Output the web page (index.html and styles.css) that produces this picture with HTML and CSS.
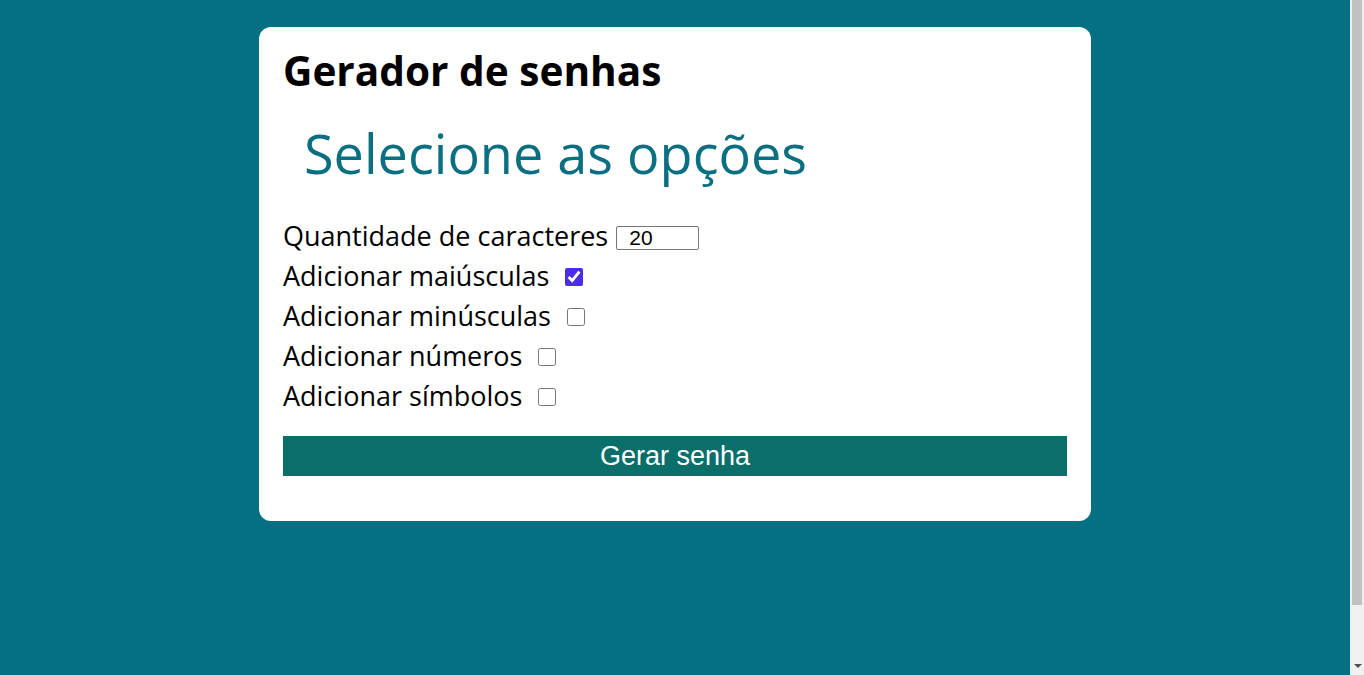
FILE: index.html
```html
<!DOCTYPE html>
<html lang="pt-BR">
<head>
<meta charset="utf-8">
<title>Gerador de senhas</title>
<link rel="stylesheet" href="styles.css">
</head>
<body>
<main class="card">
  <h1 class="title">Gerador de senhas</h1>
  <h2 class="subtitle">Selecione as opções</h2>
  <form class="options">
    <div class="row"><label for="qtd">Quantidade de caracteres</label> <input id="qtd" class="num" type="text" value="20"></div>
    <div class="row"><label for="mai">Adicionar maiúsculas</label> <input id="mai" class="check" type="checkbox" checked></div>
    <div class="row"><label for="min">Adicionar minúsculas</label> <input id="min" class="check" type="checkbox"></div>
    <div class="row"><label for="numb">Adicionar números</label> <input id="numb" class="check" type="checkbox"></div>
    <div class="row"><label for="sym">Adicionar símbolos</label> <input id="sym" class="check" type="checkbox"></div>
    <button type="button" class="btn">Gerar senha</button>
  </form>
</main>
<div class="scrollbar" aria-hidden="true">
  <div class="scroll-thumb"></div>
  <div class="scroll-arrow"></div>
</div>
</body>
</html>
```
FILE: styles.css
```css
html, body {
  margin: 0;
  padding: 0;
}
body {
  background: #067083;
  font-family: "Open Sans", sans-serif;
  padding: 27px 14px 0 0;
  min-height: 675px;
  box-sizing: border-box;
}
.card {
  width: 784px;
  margin: 0 auto;
  background: #ffffff;
  border-radius: 12px;
  padding: 20px 24px 45px;
}
.title {
  margin: 0;
  font-size: 40.6px;
  line-height: 48px;
  font-weight: 700;
  color: #000;
}
.subtitle {
  margin: 26px 0 0;
  padding-left: 21px;
  font-size: 54px;
  line-height: 64px;
  font-weight: 400;
  color: #0a6f80;
}
.options {
  margin: 31px 0 0;
  display: flex;
  flex-direction: column;
}
.row {
  height: 40px;
  line-height: 40px;
  font-size: 27px;
  color: #000;
  white-space: nowrap;
}
.num {
  width: 83px;
  height: 24px;
  box-sizing: border-box;
  border: 1px solid #767676;
  border-radius: 2px;
  padding: 0 0 0 12px;
  margin-left: 1px;
  font-family: "Liberation Sans", Arial, sans-serif;
  font-size: 21px;
  vertical-align: 1px;
}
.check {
  width: 18px;
  height: 18px;
  margin: 0 0 0 9px;
  accent-color: #4b2de6;
  vertical-align: 0;
}
.btn {
  margin-top: 20px;
  height: 40px;
  width: 100%;
  border: none;
  background: #0a6e6b;
  color: #fff;
  font-family: "Liberation Sans", Arial, sans-serif;
  font-size: 27px;
  padding: 0;
}
.scrollbar {
  position: fixed;
  top: 0;
  right: 0;
  width: 13px;
  height: 100vh;
  background: #f0f0f0;
  border-left: 1px solid #e6eef0;
}
.scroll-thumb {
  margin: 0 2px 0 1px;
  height: 605px;
  background: #c1c1c1;
}
.scroll-arrow {
  position: absolute;
  left: 3px;
  bottom: 7px;
  width: 0;
  height: 0;
  border-left: 4px solid transparent;
  border-right: 4px solid transparent;
  border-top: 4px solid #505050;
}
```
